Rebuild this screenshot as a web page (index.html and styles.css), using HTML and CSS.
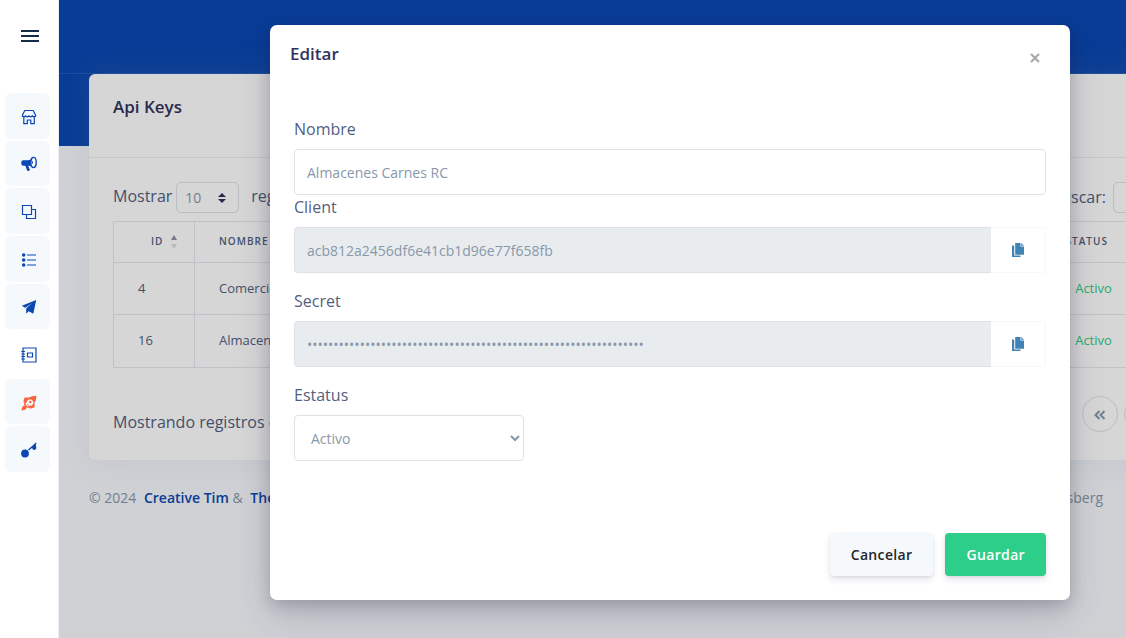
FILE: index.html
```html
<!DOCTYPE html>
<html lang="es">
<head>
<meta charset="utf-8">
<title>Api Keys</title>
<link rel="stylesheet" href="styles.css">
</head>
<body>
<div class="page">
  <aside class="sidebar">
    <button class="menu-toggle" aria-label="Menú"><i></i><i></i><i></i></button>
    <nav class="side-nav">
      <a class="side-link" href="#" aria-label="Tienda"><svg viewBox="0 0 16 16" class="line"><path d="M3.800 1.500h8.400l2.300 4.500v1.500h-1.200v7.200h-3.500v-3.700H6.300v3.700H2.800V7.500H1.500V6zM1.500 6.800q1.600 2 3.200 0q1.700 2 3.300 0q1.700 2 3.300 0q1.600 2 3.200 0"/></svg></a>
      <a class="side-link" href="#" aria-label="Anuncios"><svg viewBox="0 0 16 16"><path d="M2 4.300h4.500C9 4.300 10.500 3.300 11.800 1.600V11.400C10.500 10.200 9 9.700 7.200 9.700l1.600 3.900q.2.900-.7 1.200l-.9.200q-.7.100-1-.6L4.300 9.700H2Q.2 9.500.2 7T2 4.300z"/><ellipse cx="12.500" cy="6.500" rx="2.700" ry="5.100" fill="#f6f9fc" stroke="currentColor" stroke-width="1.400"/><path d="M10.800 4.600q2.500 1.900 0 3.800z"/></svg></a>
      <a class="side-link" href="#" aria-label="Copias"><svg viewBox="0 0 16 16" class="line"><path d="M1.500 1.500h9v9h-9zM10.500 5.500h4v9h-9v-4"/></svg></a>
      <a class="side-link" href="#" aria-label="Lista"><svg viewBox="0 0 16 16"><circle cx="2.700" cy="3" r="1.800"/><circle cx="2.700" cy="8" r="1.800"/><circle cx="2.700" cy="13" r="1.800"/><path d="M6 2.400h9v1.200H6zM6 7.400h9v1.200H6zM6 12.400h9v1.200H6z"/></svg></a>
      <a class="side-link" href="#" aria-label="Enviar"><svg viewBox="0 0 16 16"><path d="M15.200 1 .8 6.700l3.300 2L11.500 4 5.200 9.800v4.900l2.600-2.500 4.500 2.500z"/><path d="m5.200 9.300 6.600-5.500-3.500 6z"/></svg></a>
      <a class="side-link current" href="#" aria-label="Agenda"><svg viewBox="0 0 16 16" class="line"><path d="M2 1h13v14H2zM6.500 6h5v4h-5zM.300 4.500h3.700M.300 7h3.700M.300 9.500h3.700M.300 12h3.700"/></svg></a>
      <a class="side-link accent" href="#" aria-label="Lanzar"><svg viewBox="0 0 16 16"><path fill-rule="evenodd" d="M15.500.7Q11 .6 7.800 2.500L3.500 2.400 2.400 7l1 .7-.7 1.800 3.700 3.600 1.700-.7 1 1.300 4.600-1.500-.2-4.700Q15.500 5 15.500.7zM9 4.200a3.300 3.300 0 1 0 .1 0zM5.100 7.300l-.7 2 2.200 2.200 1.900-.8z"/><circle cx="9.300" cy="7" r="1.200"/><path d="M2.500 10.700q1.900-.4 2.700.8t0 2.300Q3.500 15.500.5 15.500q0-3.500 2-4.800z"/></svg></a>
      <a class="side-link" href="#" aria-label="Llaves"><svg viewBox="0 0 16 16"><circle cx="4" cy="11.500" r="3.900"/><path d="m7 7.600 8-7 .6.900-.8.900.6 4.200-1.600 1.500-2.200-.7-.4-1.600-3.200 2.800z"/></svg></a>
    </nav>
  </aside>

  <main class="main">
    <header class="hero"><div class="topbar"></div></header>
    <div class="content">
      <section class="card">
        <h1 class="card-title">Api Keys</h1>
        <div class="card-body">
          <div class="tools">
            <label class="tool">Mostrar
              <span class="length"><select class="small-field"><option>10</option><option>25</option></select><svg viewBox="0 0 8 10"><path d="M4 0 8 4H0zM4 10 0 6h8z"/></svg></span>
              registros</label>
            <label class="tool search">Buscar: <input class="small-field" type="search"></label>
          </div>
          <table class="keys">
            <colgroup><col class="col-id"><col><col class="col-status"><col class="col-actions"></colgroup>
            <thead><tr><th class="sorted">ID <span class="sort"><i class="up"></i><i class="down"></i></span></th><th>Nombre</th><th class="status-head">Estatus</th><th></th></tr></thead>
            <tbody>
              <tr><td>4</td><td>Comercio</td><td class="active">Activo</td><td></td></tr>
              <tr><td>16</td><td>Almacenes</td><td class="active">Activo</td><td></td></tr>
            </tbody>
          </table>
          <div class="summary">
            <p>Mostrando registros del 1</p>
            <div class="pager">
              <button aria-label="Primera"><svg viewBox="0 0 12 10"><path d="M5.500 1 1.500 5l4 4M10.500 1l-4 4 4 4"/></svg></button>
              <button aria-label="Anterior"><svg viewBox="0 0 12 10"><path d="M8 1 4 5l4 4"/></svg></button>
              <button>1</button>
              <button aria-label="Siguiente"><svg viewBox="0 0 12 10"><path d="m4 1 4 4-4 4"/></svg></button>
              <button aria-label="Última"><svg viewBox="0 0 12 10"><path d="m1.500 1 4 4-4 4M6.500 1l4 4-4 4"/></svg></button>
            </div>
          </div>
        </div>
      </section>
      <footer class="footer">
        <p>© 2024 <a href="#">Creative Tim</a> &amp; <a href="#">Themesberg</a></p>
        <p class="author">Themesberg</p>
      </footer>
    </div>
  </main>

  <div class="overlay">
    <form class="modal" role="dialog" aria-labelledby="modal-title">
      <div class="modal-head">
        <h2 id="modal-title">Editar</h2>
        <button type="button" class="close" aria-label="Cerrar"><svg viewBox="0 0 10 10"><path d="m1 1 8 8M9 1 1 9"/></svg></button>
      </div>
      <div class="modal-body">
        <div class="field"><label for="name">Nombre</label><input id="name" class="control" type="text" value="Almacenes Carnes RC"></div>
        <div class="field spaced"><label for="client">Client</label>
          <div class="group"><input id="client" class="control" type="text" readonly value="acb812a2456df6e41cb1d96e77f658fb"><button type="button" class="copy" aria-label="Copiar client"><svg viewBox="0 0 12 14"><path d="M0 2.500h2.200v10h6.300V14H0z"/><path d="M3.200 0h5.300v3.500H12v8.200H3.200z"/><path d="M9.200 0 12 2.800H9.200z"/></svg></button></div></div>
        <div class="field spaced"><label for="secret">Secret</label>
          <div class="group"><input id="secret" class="control" type="password" readonly value="0123456789abcdef0123456789abcdef0123456789abcdef0123456789abcdef"><button type="button" class="copy" aria-label="Copiar secret"><svg viewBox="0 0 12 14"><path d="M0 2.500h2.200v10h6.300V14H0z"/><path d="M3.200 0h5.300v3.500H12v8.200H3.200z"/><path d="M9.200 0 12 2.800H9.200z"/></svg></button></div></div>
        <div class="field"><label for="status">Estatus</label><select id="status" class="control status"><option>Activo</option><option>Inactivo</option></select></div>
      </div>
      <div class="modal-foot"><button type="button" class="btn light">Cancelar</button><button type="submit" class="btn green">Guardar</button></div>
    </form>
  </div>
</div>
</body>
</html>
```

FILE: styles.css
```css
* { box-sizing: border-box; }
body {
  margin: 0;
  overflow: hidden;
  background: #f8f9fe;
  color: #525f7f;
  font: 400 16px/24px "Open Sans", sans-serif;
}
h1, h2, p { margin: 0; }
a { color: #0b48b3; text-decoration: none; }
button, input, select { font-family: inherit; }

.page {
  position: relative;
  display: flex;
  min-width: 1340px;
  min-height: 100vh;
}

/* Sidebar */
.sidebar {
  position: relative;
  z-index: 3;
  flex: none;
  width: 59px;
  padding: 30px 8px 0 5px;
  background: #fff;
  border-right: 1px solid #eceef2;
}
.menu-toggle {
  display: grid;
  gap: 3px;
  width: 18px;
  margin: 0 0 51px 16px;
  padding: 0;
  border: 0;
  background: none;
}
.menu-toggle i { height: 2px; background: #172b4d; }
.side-nav {
  display: grid;
  grid-auto-rows: 1fr;
  gap: 2px;
  height: 379px;
}
.side-link {
  display: grid;
  place-items: center;
  padding: 2px 0 0 2px;
  border-radius: 6px;
  background: #f6f9fc;
  color: #0b48b3;
}
.side-link svg { width: 16px; height: 16px; fill: currentColor; }
.side-link .line { fill: none; stroke: currentColor; stroke-width: 1.2; }
.side-link.current { background: none; }
.side-link.accent { color: #fb6340; }

/* Page */
.main { flex: 1; min-width: 0; }
.hero { height: 146px; background: #0b48b3; }
.topbar { height: 74px; border-bottom: 1px solid #2359ba; }
.content { margin-top: -72px; padding: 0 30px; }
.card {
  position: relative;
  border-radius: 6px;
  background: #fff;
  box-shadow: 0 0 32px rgba(136, 152, 170, .15);
}
.card-title {
  padding: 20px 24px 37px;
  border-bottom: 1px solid #ebedf0;
  color: #32325d;
  font-size: 17px;
  font-weight: 600;
  line-height: 26px;
}
.card-body { padding: 24px 24px 26px; }
.tools { display: flex; justify-content: space-between; }
.tool { display: flex; gap: 4px; height: 31px; line-height: 28px; }
.search { gap: 7px; line-height: 30px; }
.length { position: relative; margin-right: 8px; }
.small-field {
  height: 31px;
  padding: 0 8px;
  border: 1px solid #dee2e6;
  border-radius: 5px;
  background: #fff;
  color: #8898aa;
  font-size: 14px;
}
.length .small-field { display: block; width: 63px; appearance: none; }
.length svg {
  position: absolute;
  top: 11px;
  right: 13px;
  width: 8px;
  height: 10px;
  fill: #32325d;
}
.search .small-field { width: 173px; }

.keys {
  width: 100%;
  margin-top: 8px;
  border-collapse: collapse;
  table-layout: fixed;
  font-size: 13px;
}
.col-id { width: 81px; }
.col-status { width: 122px; }
.col-actions { width: 131px; }
.keys th, .keys td {
  padding: 0 24px 2px;
  border: 1px solid #e6e8f0;
  text-align: left;
  white-space: nowrap;
}
.keys th {
  height: 41px;
  font-size: 10px;
  font-weight: 600;
  letter-spacing: 1px;
  text-transform: uppercase;
}
.keys .sorted { padding: 0 16px 2px 37px; }
.keys .status-head { padding: 0 16px 2px 26px; }
.keys td { height: 52px; }
.keys tr:last-child td { height: 53px; }
.keys .active { color: #2dce89; text-align: center; }
.sort { display: inline-grid; gap: 4px; margin-left: 4px; vertical-align: middle; }
.sort i { border: 3px solid transparent; }
.sort .up { border-top: 0; border-bottom: 5px solid #8c93a8; }
.sort .down { border-bottom: 0; border-top: 5px solid #dcdfe6; }

.summary { display: flex; justify-content: space-between; margin-top: 28px; }
.summary p { padding-top: 14px; }
.pager { display: flex; gap: 6px; }
.pager button {
  width: 36px;
  height: 36px;
  padding: 0;
  border: 1px solid #dee2e6;
  border-radius: 50%;
  background: #fff;
  color: #8898aa;
  font-size: 14px;
}
.pager svg { width: 12px; height: 10px; fill: none; stroke: currentColor; stroke-width: 2; }

.footer {
  display: flex;
  justify-content: space-between;
  padding: 26px 207px 0 0;
  color: #8898aa;
  font-size: 14px;
}
.footer a { margin-left: 4px; font-weight: 600; }

/* Dialog */
.overlay {
  position: absolute;
  inset: 0;
  z-index: 2;
  padding: 25px;
  background: rgba(0, 0, 0, .16);
}
.modal {
  max-width: 800px;
  margin: 0 auto;
  border-radius: 7px;
  background: #fff;
  box-shadow: 0 15px 35px rgba(50, 50, 93, .2), 0 5px 15px rgba(0, 0, 0, .17);
}
.modal-head {
  display: flex;
  justify-content: space-between;
  align-items: flex-start;
  padding: 16px 30px 26px 20px;
}
.modal-head h2 { color: #32325d; font-size: 17px; font-weight: 600; line-height: 26px; }
.close { display: flex; margin-top: 12px; padding: 0; border: 0; background: none; }
.close svg { width: 10px; height: 10px; fill: none; stroke: #a6a6a6; stroke-width: 2; }
.modal-body { padding: 24px; }
.field label { display: block; margin-bottom: 8px; }
.field.spaced { margin-bottom: 16px; }
.control {
  display: block;
  width: 100%;
  height: 46px;
  padding: 0 12px;
  border: 1px solid #dee2e6;
  border-radius: 4px;
  background: #fff;
  color: #8898aa;
  font-size: 14px;
}
.group { display: flex; }
.group .control {
  flex: 1;
  min-width: 0;
  border-right: 0;
  border-radius: 4px 0 0 4px;
  background: #e9ecef;
}
.copy {
  display: grid;
  place-items: center;
  width: 55px;
  border: 1px solid #f6f9fc;
  border-left: 0;
  border-radius: 0 4px 4px 0;
  background: #fff;
}
.copy svg { width: 12px; height: 14px; fill: #4183b5; }
.status { width: 230px; padding-right: 0; }
.modal-foot {
  display: flex;
  justify-content: flex-end;
  gap: 12px;
  padding: 48px 24px 24px;
}
.btn {
  height: 43px;
  padding: 0 21px;
  border: 0;
  border-radius: 4px;
  box-shadow: 0 4px 6px rgba(50, 50, 93, .11), 0 1px 3px rgba(0, 0, 0, .08);
  font-size: 14px;
  font-weight: 600;
  letter-spacing: .025em;
}
.light { background: #f6f9fc; color: #212529; }
.green { background: #2dce89; color: #fff; }
```
